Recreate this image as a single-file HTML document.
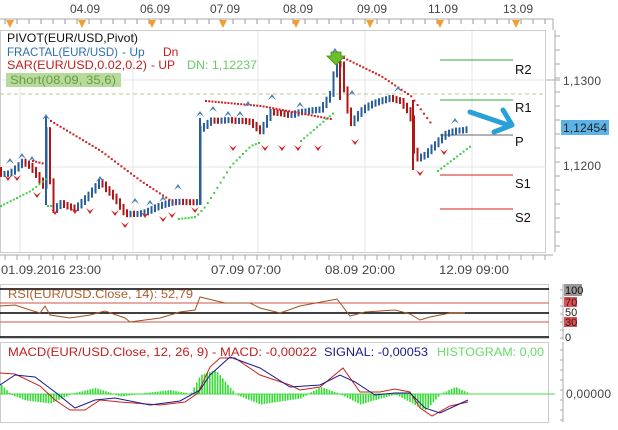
<!DOCTYPE html>
<html><head><meta charset="utf-8"><style>
body{margin:0;background:#fff;width:618px;height:425px;overflow:hidden;font-family:"Liberation Sans",sans-serif}
svg text{font-family:"Liberation Sans",sans-serif}
</style></head><body>
<svg id="s" width="618" height="425" xmlns="http://www.w3.org/2000/svg">
<rect width="618" height="425" fill="#fff"/>
<g font-size="12" fill="#444">
<text x="70" y="13" textLength="30">04.09</text><text x="140" y="13" textLength="30">06.09</text><text x="210" y="13" textLength="30">07.09</text>
<text x="283" y="13" textLength="30">08.09</text><text x="357" y="13" textLength="30">09.09</text><text x="428" y="13" textLength="30">11.09</text><text x="503" y="13" textLength="30">13.09</text>
</g>
<line x1="0" y1="19" x2="553" y2="19" stroke="#aaa"/>
<line x1="553" y1="19" x2="553" y2="30" stroke="#aaa"/>
<g id="topticks" stroke="#999"></g>
<g fill="#f0a030" id="tri"></g>
<rect x="0.5" y="30.5" width="545" height="222" fill="#fff" stroke="#ccc"/>
<g stroke="#e4e4e4">
<line x1="20" y1="31" x2="20" y2="252"/><line x1="133" y1="31" x2="133" y2="252"/>
<line x1="258" y1="31" x2="258" y2="252"/><line x1="365" y1="31" x2="365" y2="252"/><line x1="472" y1="31" x2="472" y2="252"/>
<line x1="0" y1="80" x2="546" y2="80"/><line x1="0" y1="167" x2="546" y2="167"/>
</g>
<line x1="0" y1="94" x2="546" y2="94" stroke="#b8c890" stroke-dasharray="4,3"/>
<line x1="555" y1="30" x2="555" y2="252" stroke="#aaa"/>
<g id="rticks" stroke="#aaa"></g>
<line x1="546" y1="80" x2="560" y2="80" stroke="#aaa"/>
<text x="563" y="85" font-size="12" fill="#444" textLength="38">1,1300</text>
<text x="563" y="170" font-size="12" fill="#444" textLength="38">1,1200</text>
<rect x="561" y="120" width="48" height="15" fill="#5cb4e6"/>
<text x="563" y="132" font-size="12" fill="#222" textLength="44">1,12454</text>
<line x1="440" y1="60" x2="513" y2="60" stroke="#33aa33"/>
<line x1="440" y1="100" x2="513" y2="100" stroke="#33aa33"/>
<line x1="440" y1="135" x2="513" y2="135" stroke="#666"/>
<line x1="440" y1="175" x2="513" y2="175" stroke="#cc2222"/>
<line x1="440" y1="209" x2="513" y2="209" stroke="#cc2222"/>
<g font-size="13" fill="#111">
<text x="515" y="74">R2</text><text x="515" y="112">R1</text><text x="515" y="146">P</text><text x="515" y="188">S1</text><text x="515" y="222">S2</text>
</g>
<g id="chart"></g>
<path d="M470 112 L508 125" stroke="#2aa0d8" stroke-width="5" stroke-linecap="round" fill="none"/>
<path d="M503 110 L512 125 L494 132" stroke="#2aa0d8" stroke-width="5" stroke-linecap="round" stroke-linejoin="round" fill="none"/>
<path d="M331 52 h10 v4 h4 l-9 9 l-9 -9 h4z" fill="#6cbf2a" stroke="#3f8a10" stroke-width="0.8"/>
<g font-size="12">
<text x="7" y="42" fill="#111" textLength="131" lengthAdjust="spacingAndGlyphs">PIVOT(EUR/USD,Pivot)</text>
<text x="7" y="56" fill="#2e6fb0" textLength="111" lengthAdjust="spacingAndGlyphs">FRACTAL(EUR/USD)</text>
<text x="122" y="56" fill="#2e6fb0">-  Up</text>
<text x="163" y="56" fill="#c02020">Dn</text>
<text x="7" y="69" fill="#c02020" textLength="140" lengthAdjust="spacingAndGlyphs">SAR(EUR/USD,0.02,0.2)</text>
<text x="151" y="69" fill="#c02020">-  UP</text>
<text x="187" y="69" fill="#66cc66" textLength="70" lengthAdjust="spacingAndGlyphs">DN: 1,12237</text>
</g>
<rect x="6" y="73" width="115" height="14" fill="#b7db9a"/>
<text x="10" y="84" font-size="12" fill="#6a9a4a" textLength="106" lengthAdjust="spacingAndGlyphs">Short(08.09, 35,6)</text>
<line x1="0" y1="255" x2="553" y2="255" stroke="#aaa"/>
<g id="bticks" stroke="#aaa"></g>
<g font-size="12" fill="#444">
<text x="1" y="274" textLength="100" lengthAdjust="spacingAndGlyphs">01.09.2016 23:00</text><text x="211" y="274" textLength="70" lengthAdjust="spacingAndGlyphs">07.09 07:00</text>
<text x="325" y="274" textLength="70" lengthAdjust="spacingAndGlyphs">08.09 20:00</text><text x="439" y="274" textLength="70" lengthAdjust="spacingAndGlyphs">12.09 09:00</text>
</g>
<rect x="0.5" y="284.5" width="548" height="54" fill="#fff" stroke="#ccc"/>
<line x1="0" y1="289" x2="549" y2="289" stroke="#000" stroke-width="1.5"/>
<line x1="0" y1="303" x2="549" y2="303" stroke="#cc5544"/>
<line x1="0" y1="313" x2="549" y2="313" stroke="#000" stroke-width="1.5"/>
<line x1="0" y1="322" x2="549" y2="322" stroke="#cc5544"/>
<line x1="0" y1="337" x2="549" y2="337" stroke="#000" stroke-width="1.5"/>
<text x="8" y="298" font-size="12" fill="#b06030" textLength="185" lengthAdjust="spacingAndGlyphs">RSI(EUR/USD.Close, 14): 52,79</text>
<line x1="563" y1="284" x2="563" y2="340" stroke="#aaa"/>
<rect x="564" y="284" width="18" height="12" fill="#999"/><text x="565" y="294" font-size="11" fill="#111">100</text>
<rect x="564" y="297" width="13" height="10" fill="#e05050"/><text x="565" y="306" font-size="11" fill="#222">70</text>
<text x="565" y="316" font-size="11" fill="#222">50</text>
<rect x="564" y="317" width="13" height="10" fill="#e05050"/><text x="565" y="326" font-size="11" fill="#222">30</text>
<text x="565" y="341" font-size="11" fill="#222">0</text>
<g id="rsi"></g>
<rect x="0.5" y="342.5" width="548" height="80" fill="#fff" stroke="#ccc"/>
<line x1="0" y1="394" x2="555" y2="394" stroke="#44dd44"/>
<line x1="563" y1="342" x2="563" y2="422" stroke="#aaa"/>
<text x="566" y="398" font-size="12" fill="#444" textLength="45">0,00000</text>
<g font-size="12">
<text x="8" y="356" fill="#c02020" textLength="309" lengthAdjust="spacingAndGlyphs">MACD(EUR/USD.Close, 12, 26, 9) - MACD: -0,00022</text>
<text x="324" y="356" fill="#1a1a90" textLength="104" lengthAdjust="spacingAndGlyphs">SIGNAL: -0,00053</text>
<text x="437" y="356" fill="#66dd66" textLength="107" lengthAdjust="spacingAndGlyphs">HISTOGRAM: 0,00</text>
</g>
<g id="macd"></g>
</svg>
<script>
const NS="http://www.w3.org/2000/svg";
function el(p,t,a){const e=document.createElementNS(NS,t);for(const k in a)e.setAttribute(k,a[k]);document.getElementById(p).appendChild(e);return e;}
for(let x=5;x<553;x+=12)el("topticks","line",{x1:x,y1:19,x2:x,y2:24});
[10,82,152,223,296,370,440,516].forEach(x=>el("tri","path",{d:`M${x-4} 20 L${x+4} 20 L${x} 28z`}));
for(let y=36;y<252;y+=14)el("rticks","line",{x1:555,y1:y,x2:560,y2:y});
for(let x=5;x<553;x+=12)el("bticks","line",{x1:x,y1:255,x2:x,y2:260});
for(let y=290;y<340;y+=8)el("rsi","line",{x1:560,y1:y,x2:563,y2:y,stroke:"#aaa"});
function interp(pts,x){for(let i=1;i<pts.length;i++)if(x<=pts[i][0]){const a=pts[i-1],b=pts[i];return a[1]+(b[1]-a[1])*(x-a[0])/(b[0]-a[0]);}return pts[pts.length-1][1];}
const P=[[0,170],[10,170],[22,163],[30,170],[40,185],[44,190],[46,125],[50,182],[53,210],[60,200],[75,205],[90,195],[100,185],[105,192],[115,200],[125,212],[130,210],[145,210],[165,208],[175,205],[190,200],[198,198],[200,125],[210,118],[220,122],[235,125],[250,122],[260,128],[270,108],[280,112],[290,118],[305,115],[320,108],[330,90],[335,62],[340,58],[345,95],[350,125],[360,115],[375,105],[390,95],[400,97],[410,112],[415,160],[425,158],[435,148],[445,135],[455,128],[468,125]];
let prev=170;
for(let x=1;x<=468;x+=3.5){let c=interp(P,x)+(Math.sin(x*1.7)*4);let o=prev;let top=Math.min(o,c)-3,bot=Math.max(o,c)+3;
 el("chart","line",{x1:x,y1:top,x2:x,y2:bot,stroke:c<o?"#2a5f9e":"#b01818","stroke-width":2});prev=c;}
el("chart","line",{x1:46,y1:117,x2:46,y2:205,stroke:"#2a5f9e","stroke-width":2});
el("chart","line",{x1:200,y1:118,x2:200,y2:205,stroke:"#2a5f9e","stroke-width":2});
el("chart","line",{x1:340,y1:55,x2:340,y2:100,stroke:"#b01818","stroke-width":2});
el("chart","line",{x1:413,y1:100,x2:413,y2:170,stroke:"#b01818","stroke-width":2});
function dots(pts,col){for(let x=pts[0][0];x<=pts[pts.length-1][0];x+=3.2)el("chart","rect",{x:x,y:interp(pts,x),width:2,height:2,fill:col});}
dots([[0,205],[30,190],[45,178]],"#44cc44");
dots([[32,160],[44,163]],"#cc2222");
dots([[50,120],[100,150],[140,180],[175,203]],"#cc2222");
dots([[47,205],[53,205]],"#44cc44");
dots([[178,218],[195,216],[205,205],[230,165],[250,145],[258,142]],"#44cc44");
dots([[205,100],[260,105],[330,118]],"#cc2222");
dots([[300,140],[335,110]],"#44cc44");
dots([[343,57],[380,75],[410,95],[432,125]],"#cc2222");
dots([[437,170],[470,145]],"#44cc44");
const up=[[10,160],[22,155],[32,158],[46,116],[100,178],[135,200],[150,202],[163,198],[178,186],[200,113],[213,108],[228,113],[240,113],[248,103],[272,96],[300,104],[335,50],[352,92],[398,88],[455,120]];
const dn=[[8,178],[17,178],[37,195],[55,212],[75,211],[90,211],[115,213],[125,225],[145,215],[163,219],[172,215],[195,210],[233,148],[265,148],[282,148],[298,148],[318,148],[355,142],[420,173],[444,152]];
up.forEach(([x,y])=>el("chart","path",{d:`M${x-4} ${y+4} L${x} ${y-2} L${x+4} ${y+4} L${x} ${y+1}z`,fill:"#4a7fb8"}));
dn.forEach(([x,y])=>el("chart","path",{d:`M${x-4} ${y-3} L${x} ${y+3} L${x+4} ${y-3} L${x} ${y}z`,fill:"#cc2222"}));
const R=[[0,306],[15,305],[30,310],[40,313],[45,306],[50,315],[70,318],[90,315],[105,311],[125,318],[130,322],[160,318],[180,312],[195,310],[200,297],[225,303],[250,303],[260,308],[280,313],[300,306],[337,299],[350,316],[365,312],[395,310],[410,314],[420,320],[430,317],[450,313],[465,313]];
el("rsi","path",{d:"M"+R.map(p=>p.join(" ")).join(" L"),fill:"none",stroke:"#a05020","stroke-width":1});
for(let y=350;y<422;y+=10)el("macd","line",{x1:560,y1:y,x2:563,y2:y,stroke:"#aaa"});
const H=x=>{const pts=[[0,384],[10,394],[25,400],[50,403],[70,394],[95,388],[120,396],[170,390],[190,394],[200,375],[215,370],[235,394],[260,404],[300,398],[320,387],[340,394],[360,404],[380,398],[395,394],[410,402],[425,410],[440,394],[455,387],[470,394]];return interp(pts,x)};
for(let x=1;x<470;x+=2.6){const y=H(x);el("macd","rect",{x:x,y:Math.min(y,394),width:1.6,height:Math.abs(y-394)+0.5,fill:"#33dd33"});}
const Mr=[[0,373],[15,374],[40,386],[55,400],[70,410],[85,410],[100,400],[120,402],[160,405],[185,402],[198,393],[210,367],[220,358],[235,358],[260,375],[290,385],[300,390],[320,387],[343,368],[360,392],[380,392],[395,389],[410,392],[420,408],[432,416],[450,406],[468,402]];
const Ms=[[0,385],[15,375],[35,377],[55,392],[75,408],[95,400],[115,398],[150,405],[180,401],[200,390],[210,375],[230,357],[260,368],[290,387],[320,385],[340,375],[355,382],[375,395],[395,393],[410,393],[425,408],[440,413],[455,406],[468,400]];
el("macd","path",{d:"M"+Mr.map(p=>p.join(" ")).join(" L"),fill:"none",stroke:"#cc2020"});
el("macd","path",{d:"M"+Ms.map(p=>p.join(" ")).join(" L"),fill:"none",stroke:"#1a1a90"});
</script>
</body></html>
